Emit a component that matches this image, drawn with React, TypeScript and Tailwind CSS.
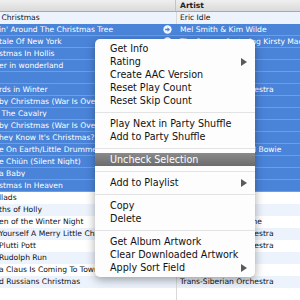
const rows: { title: string; artist: string; sel?: boolean; link?: boolean }[] = [
  { title: " Christmas", artist: "Eric Idle" },
  { title: "in' Around The Christmas Tree", artist: "Mel Smith & Kim Wilde", sel: true, link: true },
  { title: "tale Of New York", artist: "The Pogues featuring Kirsty MacColl", sel: true, link: true },
  { title: "stmas In Hollis", artist: "Run-DMC", sel: true },
  { title: "er in wonderland", artist: "Eurythmics", sel: true },
  { title: "", artist: "", sel: true },
  { title: "rds in Winter", artist: "Trans-Siberian Orchestra", sel: true },
  { title: "by Christmas (War Is Over)", artist: "John Lennon", sel: true },
  { title: " The Cavalry", artist: "Jona Lewie", sel: true },
  { title: "by Christmas (War Is Over)", artist: "Sarah McLachlan", sel: true },
  { title: "hey Know It's Christmas?", artist: "Band Aid", sel: true },
  { title: "e On Earth/Little Drummer Boy", artist: "Bing Crosby & Davd Bowie", sel: true },
  { title: "e Chiún (Silent Night)", artist: "Enya", sel: true },
  { title: "a Baby", artist: "Eartha Kitt", sel: true },
  { title: "stmas In Heaven", artist: "Monty Python", sel: true },
  { title: "llads", artist: "" },
  { title: "ths of Holly", artist: "Sufjan Stevens" },
  { title: "en of the Winter Night", artist: "Lorena & Elsa Levene" },
  { title: "Yourself A Merry Little Christmas", artist: "Trans-Siberian Orchestra" },
  { title: "Plutti Pott", artist: "Trans-Siberian Orchestra" },
  { title: "Rudolph Run", artist: "Chuck Berry" },
  { title: "a Claus Is Coming To Town", artist: "Bruce Springsteen" },
  { title: "d Russians Christmas", artist: "Trans-Siberian Orchestra" },
  { title: "", artist: "" },
];

type Item = { label: string; sub?: boolean; hot?: boolean } | "sep";

const menu: Item[] = [
  { label: "Get Info" },
  { label: "Rating", sub: true },
  { label: "Create AAC Version" },
  { label: "Reset Play Count" },
  { label: "Reset Skip Count" },
  "sep",
  { label: "Play Next in Party Shuffle" },
  { label: "Add to Party Shuffle" },
  "sep",
  { label: "Uncheck Selection", hot: true },
  "sep",
  { label: "Add to Playlist", sub: true },
  "sep",
  { label: "Copy" },
  { label: "Delete" },
  "sep",
  { label: "Get Album Artwork" },
  { label: "Clear Downloaded Artwork" },
  { label: "Apply Sort Field", sub: true },
];

function LinkArrow() {
  return (
    <svg width="9" height="9" viewBox="0 0 10 10" className="shrink-0">
      <circle cx="5" cy="5" r="4.6" fill="#f4f7fc" />
      <path d="M2.4 4.3h2.6V2.6L7.8 5 5 7.4V5.7H2.4z" fill="#4a84d8" />
    </svg>
  );
}

export default function App() {
  return (
    <div className="relative h-[300px] w-[300px] overflow-hidden bg-white font-['DejaVu_Sans',sans-serif] text-[7.6px] leading-none">
      <div className="flex h-[12px] border-b border-[#a9a9a9] bg-gradient-to-b from-[#efefef] to-[#dadada]">
        <div className="w-[176px] border-r border-[#c4c4c4]" />
        <div className="flex items-center pl-[4px] font-bold text-[#222]">Artist</div>
      </div>
      {rows.map((r, i) => (
        <div
          key={i}
          className={
            r.sel
              ? "flex h-[12px] border-b border-[#6e9de2] bg-[#4a84d8] text-white"
              : i % 2 === 0
              ? "flex h-[12px] bg-[#edf3fd] text-[#111]"
              : "flex h-[12px] bg-white text-[#111]"
          }
        >
          <div className="flex w-[176px] items-center overflow-hidden whitespace-pre pr-[4px]">
            <span className="-ml-[1px] flex-1 overflow-hidden">{r.title}</span>
            {r.link && <LinkArrow />}
          </div>
          <div
            className={
              r.sel
                ? "flex flex-1 items-center overflow-hidden whitespace-nowrap pl-[4px]"
                : "flex flex-1 items-center overflow-hidden whitespace-nowrap border-l border-[#d9d9d9] pl-[3px]"
            }
          >
            {r.artist}
          </div>
        </div>
      ))}

      <div className="absolute left-[95px] top-[39px] w-[160px] rounded-[5px] bg-[#fdfdfd] py-[3px] text-[9.6px] text-[#111] shadow-[0_3px_10px_rgba(0,0,0,0.35)]">
        {menu.map((m, i) =>
          m === "sep" ? (
            <div key={i} className="flex h-[10px] items-center">
              <div className="h-px w-full bg-[#e3e3e3]" />
            </div>
          ) : (
            <div
              key={i}
              className={
                m.hot
                  ? "flex h-[13px] items-center bg-gradient-to-b from-[#8a8a8a] to-[#6c6c6c] pl-[15px] pr-[8px] text-white"
                  : "flex h-[13px] items-center pl-[15px] pr-[8px]"
              }
            >
              <span className="flex-1 whitespace-nowrap">{m.label}</span>
              {m.sub && (
                <svg width="6" height="8" viewBox="0 0 6 8">
                  <path d="M0 0L6 4L0 8z" fill="#5a5a5a" />
                </svg>
              )}
            </div>
          )
        )}
      </div>
    </div>
  );
}
